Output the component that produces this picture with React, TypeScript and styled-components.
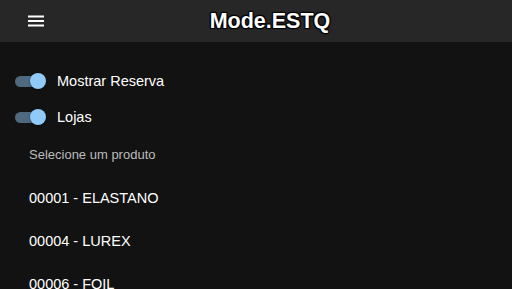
import React, { useState } from 'react';
import styled, { createGlobalStyle } from 'styled-components';

const GlobalStyle = createGlobalStyle`
  html, body {
    margin: 0;
    padding: 0;
    background: #121212;
    font-family: "Liberation Sans", Arial, sans-serif;
    color: #fff;
  }
`;

const Page = styled.div`
  width: 512px;
  height: 289px;
  overflow: hidden;
  background: #121212;
`;

const TopBar = styled.header`
  height: 42px;
  background: #272727;
  display: flex;
  align-items: center;
  padding: 0 20px 0 28px;
  box-sizing: border-box;
`;

const MenuButton = styled.button`
  background: none;
  border: none;
  padding: 0;
  width: 16px;
  height: 14px;
  display: flex;
  cursor: pointer;
`;

const Title = styled.h1`
  flex: 1;
  margin: 0;
  padding-left: 4px;
  text-align: center;
  font-size: 21.5px;
  font-weight: bold;
  color: #fff;
  text-shadow: 1px 1px 1px #000, -1px -1px 1px #000, 1px -1px 1px #000, -1px 1px 1px #000;
`;

const Content = styled.main`
  padding: 21px 0 0 14px;
`;

const ToggleRow = styled.label`
  display: flex;
  align-items: center;
  height: 36px;
  cursor: pointer;
`;

const Switch = styled.span<{ $on: boolean }>`
  position: relative;
  width: 28px;
  height: 11px;
  border-radius: 6px;
  margin: 0 14px 0 1px;
  background: ${(p) => (p.$on ? '#4f6a80' : '#5b5b5b')};

  &::after {
    content: '';
    position: absolute;
    top: 50%;
    left: ${(p) => (p.$on ? '15px' : '-2px')};
    width: 16px;
    height: 16px;
    margin-top: -8px;
    border-radius: 50%;
    background: ${(p) => (p.$on ? '#90caf9' : '#e0e0e0')};
    box-shadow: 0 1px 2px rgba(0, 0, 0, 0.5);
  }
`;

const ToggleLabel = styled.span`
  font-size: 14.5px;
  color: #fff;
`;

const Hint = styled.div`
  font-size: 13px;
  color: #bcbcbc;
  padding-left: 15px;
  margin-top: 10px;
  height: 20px;
  line-height: 20px;
`;

const ProductList = styled.ul`
  list-style: none;
  margin: 12px 0 0;
  padding: 0;
`;

const ProductItem = styled.li`
  height: 43px;
  line-height: 43px;
  padding-left: 15px;
  font-size: 14.5px;
  color: #fff;
`;

const products = ['00001 - ELASTANO', '00004 - LUREX', '00006 - FOIL'];

export default function App() {
  const [reserva, setReserva] = useState(true);
  const [lojas, setLojas] = useState(true);

  return (
    <Page>
      <GlobalStyle />
      <TopBar>
        <MenuButton aria-label="menu">
          <svg width="16" height="14" viewBox="0 0 16 14">
            <rect x="0" y="1.5" width="16" height="2" fill="#fff" />
            <rect x="0" y="6" width="16" height="2" fill="#fff" />
            <rect x="0" y="10.5" width="16" height="2" fill="#fff" />
          </svg>
        </MenuButton>
        <Title>Mode.ESTQ</Title>
      </TopBar>
      <Content>
        <ToggleRow onClick={() => setReserva(!reserva)}>
          <Switch $on={reserva} />
          <ToggleLabel>Mostrar Reserva</ToggleLabel>
        </ToggleRow>
        <ToggleRow onClick={() => setLojas(!lojas)}>
          <Switch $on={lojas} />
          <ToggleLabel>Lojas</ToggleLabel>
        </ToggleRow>
        <Hint>Selecione um produto</Hint>
        <ProductList>
          {products.map((p) => (
            <ProductItem key={p}>{p}</ProductItem>
          ))}
        </ProductList>
      </Content>
    </Page>
  );
}
